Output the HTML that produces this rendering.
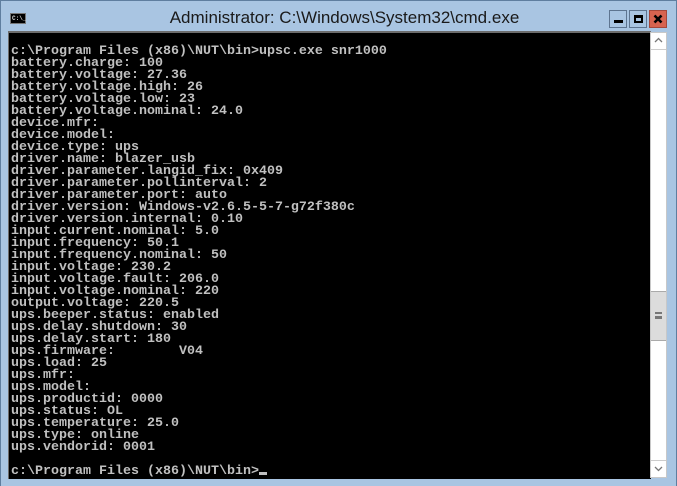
<!DOCTYPE html>
<html><head><style>
*{margin:0;padding:0;box-sizing:border-box}
body{width:677px;height:486px;overflow:hidden;background:#a9c5e2;position:relative;font-family:"Liberation Sans",sans-serif}
.frame{position:absolute;left:0;top:0;width:677px;height:486px;border:1px solid #5f7e9f;border-bottom:none}
.title{position:absolute;left:0;width:677px;top:8px;text-align:center;font-size:17px;color:#1a1a1a;padding-left:12px}
.icon{position:absolute;left:10px;top:13px;width:16px;height:11px;background:#000;border:1px solid #777}
.icon span{position:absolute;left:1px;top:1px;font:bold 6px "Liberation Mono",monospace;color:#ddd;line-height:7px}
.btn{position:absolute;top:10px;width:18px;height:18px;border:1px solid #5e7590;background:#a9c5e2}
.close{background:#d7634f;border-color:#a5473a}
.con{position:absolute;left:8px;top:31px;width:643px;height:448px;background:#000;border-top:2px solid #6d6d6d;border-left:1px solid #6d6d6d}
pre{position:absolute;left:2px;top:13px;font:bold 13.33px/12px "Liberation Mono",monospace;color:#c0c0c0;letter-spacing:0}
.sb{position:absolute;left:650px;top:32px;width:17px;height:446px;background:#fff;border:1px solid #c8c8c8}
.thumb{position:absolute;left:0;top:258px;width:15px;height:50px;background:#dcdcdc;border-top:1px solid #aaa;border-bottom:1px solid #aaa}
.cur{display:inline-block;width:8px;height:3px;background:#c0c0c0;vertical-align:-1px}
</style></head><body>
<div class="frame"></div>
<div class="icon"><span>C:\_</span></div>
<div class="title">Administrator: C:\Windows\System32\cmd.exe</div>
<div class="btn" style="left:609px"><div style="position:absolute;left:4px;top:9px;width:9px;height:3px;background:#000"></div></div>
<div class="btn" style="left:629px"><div style="position:absolute;left:4px;top:4px;width:9px;height:8px;border:2px solid #000;border-top-width:3px"></div></div>
<div class="btn close" style="left:649px"><svg width="16" height="16" style="position:absolute;left:0;top:0"><path d="M4.5 4.5L11.5 11.5M11.5 4.5L4.5 11.5" stroke="#000" stroke-width="2.6"/></svg></div>
<div class="con"><pre>c:\Program Files (x86)\NUT\bin&gt;upsc.exe snr1000
battery.charge: 100
battery.voltage: 27.36
battery.voltage.high: 26
battery.voltage.low: 23
battery.voltage.nominal: 24.0
device.mfr:
device.model:
device.type: ups
driver.name: blazer_usb
driver.parameter.langid_fix: 0x409
driver.parameter.pollinterval: 2
driver.parameter.port: auto
driver.version: Windows-v2.6.5-5-7-g72f380c
driver.version.internal: 0.10
input.current.nominal: 5.0
input.frequency: 50.1
input.frequency.nominal: 50
input.voltage: 230.2
input.voltage.fault: 206.0
input.voltage.nominal: 220
output.voltage: 220.5
ups.beeper.status: enabled
ups.delay.shutdown: 30
ups.delay.start: 180
ups.firmware:        V04
ups.load: 25
ups.mfr:
ups.model:
ups.productid: 0000
ups.status: OL
ups.temperature: 25.0
ups.type: online
ups.vendorid: 0001

c:\Program Files (x86)\NUT\bin&gt;<span class="cur"></span></pre></div>
<div class="sb">
<div style="position:absolute;left:0;top:0;width:15px;height:17px;border-bottom:1px solid #ccc"><svg width="15" height="16"><path d="M4 9L7.5 5.5L11 9" fill="none" stroke="#777" stroke-width="1.3"/></svg></div>
<div class="thumb"><div style="position:absolute;left:4px;top:20px;width:7px;height:7px;border-top:2px solid #777;border-bottom:2px solid #777"><div style="margin-top:1.5px;height:2px;background:#777"></div></div></div>
<div style="position:absolute;left:0;bottom:0;width:15px;height:17px;border-top:1px solid #ccc"><svg width="15" height="16"><path d="M4 6L7.5 9.5L11 6" fill="none" stroke="#777" stroke-width="1.3"/></svg></div>
</div>
</body></html>
